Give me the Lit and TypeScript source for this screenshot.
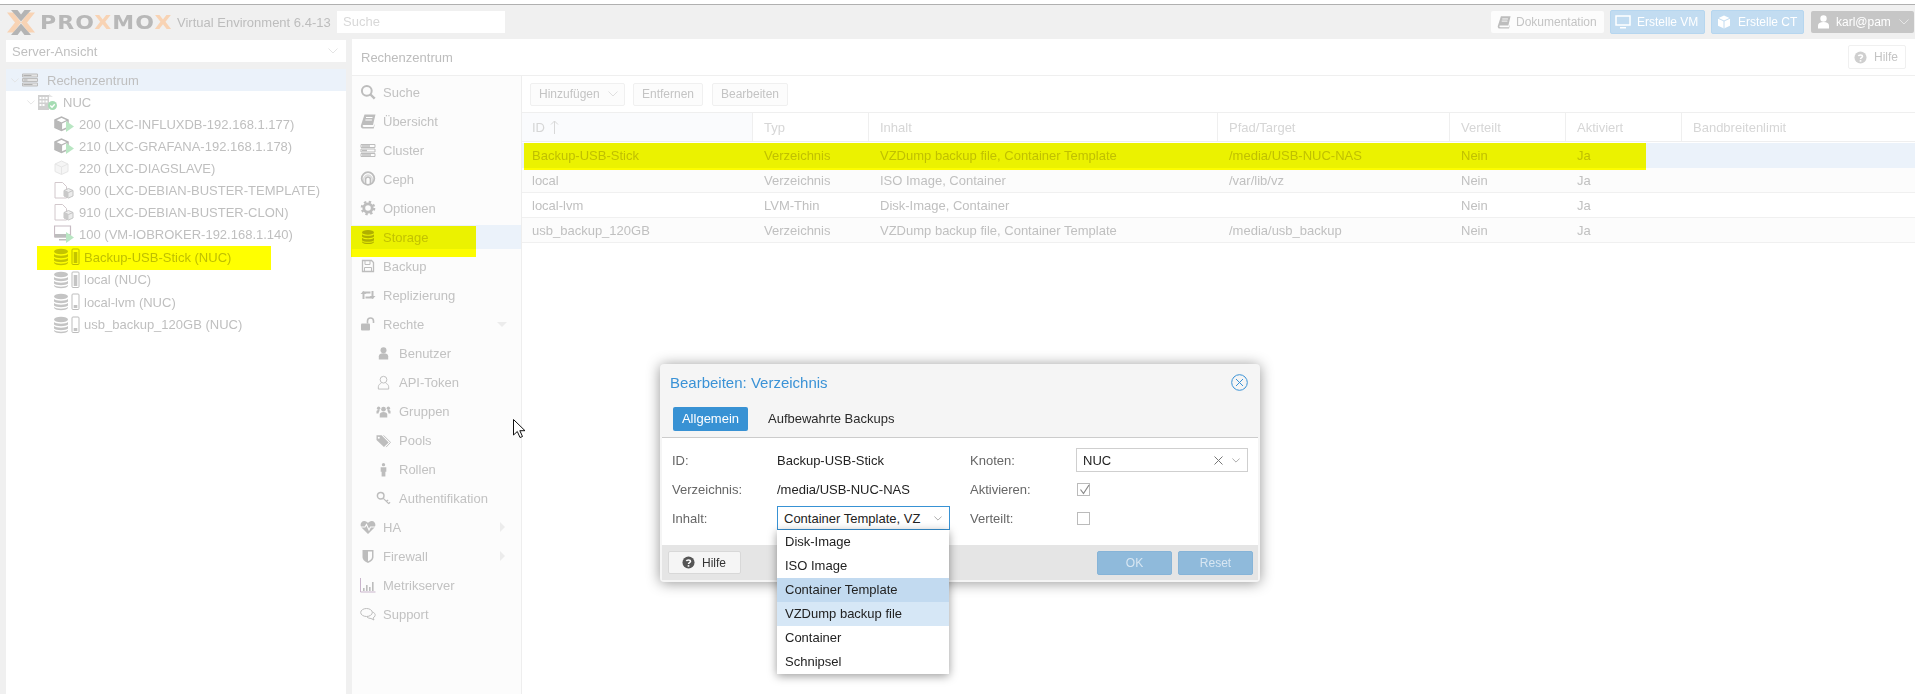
import { LitElement, html, css, svg } from "lit";
import { customElement } from "lit/decorators.js";

const ic = (vb: string, body: unknown) =>
  html`<svg class="svg" viewBox="${vb}" xmlns="http://www.w3.org/2000/svg">${body}</svg>`;

const G = "#bdbdbd";
const menuIcons: Record<string, unknown> = {
  search: ic("0 0 16 16", svg`<circle cx="6.800" cy="6.800" r="4.900" fill="none" stroke="${G}" stroke-width="2"/><path d="M10.500 10.500l4.200 4.200" stroke="${G}" stroke-width="2.400"/>`),
  book: ic("0 0 16 16", svg`<path d="M4.500 1.500H15.500L13 12H4c-1 0-1.500.6-1.300 1.200.2.500.7.800 1.300.800h9.500l1-3v1.500L13.700 15.500H3C1.500 15.500.500 14 .900 12.500z" fill="${G}"/><path d="M6 4.500h6.500M5.400 7h6.500" stroke="#fff"/>`),
  server: ic("0 0 16 16", svg`<path d="M1 2.500h14v3H1zM1 7h14v3H1zM1 11.500h14v3H1z" fill="none" stroke="${G}"/><path d="M2 4h8M2 8.500h5M2 13h9" stroke="${G}" stroke-width="1.600"/>`),
  ceph: ic("0 0 16 16", svg`<circle cx="8" cy="7.500" r="6.300" fill="none" stroke="${G}" stroke-width="1.800"/><path d="M5.600 13V8.500a2.400 2.400 0 0 1 4.800 0V13" fill="none" stroke="${G}" stroke-width="1.500"/><path d="M3.800 11V8.200a4.200 4.200 0 0 1 8.400 0V11" fill="none" stroke="${G}" stroke-width=".8"/>`),
  gear: ic("0 0 16 16", svg`<circle cx="8" cy="8" r="4.200" fill="none" stroke="${G}" stroke-width="2.800"/><circle cx="8" cy="8" r="6.200" fill="none" stroke="${G}" stroke-width="2.200" stroke-dasharray="2.400 2.470"/>`),
  db: ic("0 0 16 16", svg`<g fill="#b0b0b0"><ellipse cx="8" cy="3.400" rx="6" ry="2.400"/><path d="M2 5.200c1.500 2 10.500 2 12 0v2.400c-1.500 2.200-10.500 2.200-12 0zM2 8.800c1.500 2 10.500 2 12 0v2.400c-1.500 2.200-10.500 2.200-12 0zM2 12.200c1.500 2 10.500 2 12 0v1c-1.500 2.500-10.500 2.500-12 0z"/></g>`),
  floppy: ic("0 0 16 16", svg`<path d="M2.500 2.500h9l2 2v9h-11z" fill="none" stroke="${G}" stroke-width="1.300"/><path d="M5 3v3.500h5V3M4.500 13V9.500h7V13" fill="none" stroke="${G}"/>`),
  retweet: ic("0 0 16 16", svg`<path d="M3.500 12V5.500h7M12.500 4v6.500h-7" fill="none" stroke="${G}" stroke-width="2"/><path d="M.5 7l3-3 3 3zM9.500 9l3 3 3-3z" fill="${G}"/>`),
  unlock: ic("0 0 16 16", svg`<rect x="1" y="7.500" width="9" height="7" rx="1" fill="${G}"/><path d="M7.500 7.500V5a3 3 0 0 1 6 0v2" fill="none" stroke="${G}" stroke-width="1.600"/>`),
  user: ic("0 0 16 16", svg`<circle cx="8" cy="4.500" r="3.200" fill="${G}"/><path d="M3 14.500V11c0-2.200 1.800-3.200 5-3.200s5 1 5 3.200v3.500z" fill="${G}"/>`),
  usero: ic("0 0 16 16", svg`<circle cx="8" cy="5" r="3.600" fill="none" stroke="${G}"/><path d="M2.500 15v-2.500c0-2 2-3.500 3-3.500M13.500 15v-2.500c0-2-2-3.500-3-3.500M2.500 15h11" fill="none" stroke="${G}"/>`),
  users: ic("0 0 16 16", svg`<g fill="${G}"><circle cx="8" cy="5.500" r="2.500"/><circle cx="2.800" cy="4.500" r="1.800"/><circle cx="13.200" cy="4.500" r="1.800"/><path d="M4 14.500v-3.500c0-1.500 1.500-2.500 4-2.500s4 1 4 2.500v3.500zM.5 10V8c0-.8 1-1.500 2.300-1.500.6 0 1 .2 1.400.6-1 .6-1.500 1.700-1.500 2.900zM15.500 10V8c0-.8-1-1.500-2.300-1.500-.6 0-1 .2-1.400.6 1 .6 1.500 1.700 1.500 2.900z"/></g>`),
  tags: ic("0 0 16 16", svg`<path d="M.5 2.500h5.500l7.500 7.500-5 5-8-7.500z" fill="${G}"/><path d="M8 2.500l7.500 7.500-4.700 5" fill="none" stroke="${G}"/><circle cx="3" cy="5" r="1.100" fill="#fff"/>`),
  male: ic("0 0 16 16", svg`<circle cx="8" cy="2.800" r="1.800" fill="${G}"/><path d="M5 5.500h6v5h-1v5H6v-5H5z" fill="${G}"/>`),
  key: ic("0 0 16 16", svg`<circle cx="5" cy="5" r="3.500" fill="none" stroke="${G}" stroke-width="1.600"/><path d="M7.800 7.800l6 6M11 11l2-1.500M13.500 13.500l1.500-1.500" fill="none" stroke="${G}" stroke-width="1.300"/>`),
  heart: ic("0 0 16 16", svg`<path d="M8 15L1.500 8.500C-.5 6 1 2 4.200 2 6 2 7.300 3 8 4c.7-1 2-2 3.800-2C15 2 16.500 6 14.500 8.500z" fill="${G}"/><path d="M0 8h5l1.500-2.500L9 11l1.500-3H16" fill="none" stroke="#fcfcfc" stroke-width="1.100"/>`),
  shield: ic("0 0 16 16", svg`<path d="M2.500 2h11v7c0 3-3 5-5.500 6-2.500-1-5.500-3-5.500-6z" fill="${G}"/><path d="M8 3.500h4V9c0 2-2 3.500-4 4.300z" fill="#fcfcfc"/>`),
  chart: ic("0 0 16 16", svg`<path d="M.5 1v14h15" fill="none" stroke="#c9b5cc"/><path d="M3 11h1.600v3H3zM6 8h1.600v6H6zM9 10h1.600v4H9zM12 5h1.600v9H12z" fill="${G}"/>`),
  comments: ic("0 0 16 16", svg`<ellipse cx="6.500" cy="6.500" rx="5.800" ry="4" fill="none" stroke="${G}"/><path d="M12.500 6c2 .8 3 2 2.600 3.500-.3 1.200-1 2-2.100 2.500l1 2-3-1.500c-1.500 0-3-.5-4-1.500" fill="none" stroke="${G}"/>`),
};

const cube = svg`<path d="M1 5l6.500-3 6.500 3v7.500L7.500 15.500 1 12.500z" fill="#fff" stroke="#b5b5b5" stroke-width="1.500"/><path d="M1 5l6.500 3 6.500-3M7.500 8v7.500" fill="none" stroke="#b5b5b5" stroke-width="1.200"/><path d="M1 5l6.500 3v7.500L1 12.500z" fill="#b9b9b9"/>`;
const paleCube = svg`<path d="M1 5l6.500-3 6.500 3v7.500L7.500 15.500 1 12.500z" fill="#f5f5f5" stroke="#e6e6e6"/><path d="M1 5l6.500 3 6.500-3M7.500 8v7.500" fill="none" stroke="#e6e6e6"/>`;
const play = svg`<path d="M12 6l8 5.500L12 17z" fill="#b9e6c3"/>`;
const tplDoc = svg`<path d="M1 1.500h7.500l4 4V17H1z" fill="none" stroke="#d2c8cc"/><path d="M10 9.500l4.500-2 4.500 2v5.500l-4.500 2-4.500-2z" fill="#ececec" stroke="#c4c4c4"/><path d="M10 9.500l4.500 2 4.500-2" fill="none" stroke="#c4c4c4"/><path d="M10 9.500l4.500 2V17l-4.500-2z" fill="#c9c9c9"/>`;
const dbStack = svg`<g fill="#c4c4c4"><ellipse cx="7" cy="3.500" rx="7" ry="2.800"/><path d="M0 6c2 2.300 12 2.300 14 0v2.500c-2 2.300-12 2.300-14 0zM0 10c2 2.300 12 2.300 14 0v2.500c-2 2.300-12 2.300-14 0zM0 14c2 2.300 12 2.300 14 0v1c-2 3-12 3-14 0z"/></g>`;

const treeIcons: Record<string, unknown> = {
  server: ic("0 0 16 14", svg`<path d="M.5 1h15v3H.5zM.5 5.500h15v3H.5zM.5 10h15v3H.5z" fill="#e4e4e4" stroke="#bdbdbd"/><path d="M1.500 2.500h8M1.500 7h4M1.500 11.500h9" stroke="#b0b0b0" stroke-width="1.200"/>`),
  node: ic("0 0 19 16", svg`<path d="M0 1h11v15H0z" fill="#d0d0d0"/><path d="M1.500 3h2v2h-2zM4.500 3h2v2h-2zM7.500 3h2v2h-2zM1.500 6.500h2v2h-2zM4.500 6.500h2v2h-2zM7.500 6.500h2v2h-2zM1.500 10h2v2h-2zM4.500 10h2v2h-2z" fill="#fff"/><path d="M11 0l4 3h-4z" fill="#e6e6e6"/><circle cx="14.500" cy="11.500" r="4.500" fill="#a5dcb3"/><path d="M12.300 11.500l1.700 1.700 2.700-3" fill="none" stroke="#fff" stroke-width="1.300"/>`),
  lxc: ic("0 0 20 18", svg`${cube}${play}`),
  lxcoff: ic("0 0 20 18", paleCube),
  tpl: ic("0 0 20 18", tplDoc),
  vm: ic("0 0 20 18", svg`<path d="M.5 1h16v11H.5z" fill="none" stroke="#c8bcc4" stroke-width="1.200"/><path d="M1 9h15v3.500H1zM5 14h7v1.500H5z" fill="#bdbdbd"/><path d="M12 7l8 5.500-8 5.500z" fill="#b9e6c3"/>`),
  stFull: ic("0 0 26 18", svg`${dbStack}<rect x="18" y="1" width="7" height="15.500" rx="1" fill="#fff" stroke="#bdbdbd"/><rect x="19.700" y="4" width="3.600" height="11" fill="#c4c4c4"/>`),
  stLow: ic("0 0 26 18", svg`${dbStack}<rect x="18" y="1" width="7" height="15.500" rx="1" fill="#fff" stroke="#bdbdbd"/><rect x="19.700" y="12" width="3.600" height="3" fill="#c4c4c4"/>`),
};

const chevron = (stroke = "#dcdcdc") =>
  html`<svg class="chev" viewBox="0 0 10 6"><path d="M.5.500L5 5 9.500.500" fill="none" stroke="${stroke}"/></svg>`;

const tree = [
  { cls: "d0 sel", chev: true, icon: "server", w: "i16", text: "Rechenzentrum" },
  { cls: "d1", chev: true, icon: "node", w: "i19", text: "NUC" },
  { cls: "d2", icon: "lxc", w: "i20", text: "200 (LXC-INFLUXDB-192.168.1.177)" },
  { cls: "d2", icon: "lxc", w: "i20", text: "210 (LXC-GRAFANA-192.168.1.178)" },
  { cls: "d2", icon: "lxcoff", w: "i20", text: "220 (LXC-DIAGSLAVE)" },
  { cls: "d2", icon: "tpl", w: "i20", text: "900 (LXC-DEBIAN-BUSTER-TEMPLATE)" },
  { cls: "d2", icon: "tpl", w: "i20", text: "910 (LXC-DEBIAN-BUSTER-CLON)" },
  { cls: "d2 last", icon: "vm", w: "i20", text: "100 (VM-IOBROKER-192.168.1.140)" },
  { cls: "d2 st", icon: "stFull", w: "i26", text: "Backup-USB-Stick (NUC)" },
  { cls: "d2 st", icon: "stFull", w: "i26", text: "local (NUC)" },
  { cls: "d2 st", icon: "stLow", w: "i26", text: "local-lvm (NUC)" },
  { cls: "d2 st", icon: "stLow", w: "i26", text: "usb_backup_120GB (NUC)" },
];

const menu = [
  { icon: "search", text: "Suche" },
  { icon: "book", text: "Übersicht" },
  { icon: "server", text: "Cluster" },
  { icon: "ceph", text: "Ceph" },
  { icon: "gear", text: "Optionen" },
  { icon: "db", text: "Storage", sel: true },
  { icon: "floppy", text: "Backup" },
  { icon: "retweet", text: "Replizierung" },
  { icon: "unlock", text: "Rechte", caret: "down" },
  { icon: "user", text: "Benutzer", sub: true },
  { icon: "usero", text: "API-Token", sub: true },
  { icon: "users", text: "Gruppen", sub: true },
  { icon: "tags", text: "Pools", sub: true },
  { icon: "male", text: "Rollen", sub: true },
  { icon: "key", text: "Authentifikation", sub: true },
  { icon: "heart", text: "HA", caret: "right" },
  { icon: "shield", text: "Firewall", caret: "right" },
  { icon: "chart", text: "Metrikserver" },
  { icon: "comments", text: "Support" },
];

const cols = ["ID", "Typ", "Inhalt", "Pfad/Target", "Verteilt", "Aktiviert", "Bandbreitenlimit"];
const rows = [
  { cls: "sel", c: ["Backup-USB-Stick", "Verzeichnis", "VZDump backup file, Container Template", "/media/USB-NUC-NAS", "Nein", "Ja", ""] },
  { cls: "alt", c: ["local", "Verzeichnis", "ISO Image, Container", "/var/lib/vz", "Nein", "Ja", ""] },
  { cls: "", c: ["local-lvm", "LVM-Thin", "Disk-Image, Container", "", "Nein", "Ja", ""] },
  { cls: "alt", c: ["usb_backup_120GB", "Verzeichnis", "VZDump backup file, Container Template", "/media/usb_backup", "Nein", "Ja", ""] },
];

const drop = [
  { t: "Disk-Image", c: "" },
  { t: "ISO Image", c: "" },
  { t: "Container Template", c: "picked" },
  { t: "VZDump backup file", c: "hover" },
  { t: "Container", c: "" },
  { t: "Schnipsel", c: "" },
];

const helpIcon = (bg: string, fg: string) =>
  html`<svg class="help" viewBox="0 0 14 14"><circle cx="7" cy="7" r="6.500" fill="${bg}"/><path d="M4.800 5.500C5 3.800 9.200 3.700 9.200 5.700c0 1.500-2.200 1.500-2.200 3" fill="none" stroke="${fg}" stroke-width="1.600"/><path d="M6.100 9.800h1.800v1.700H6.100z" fill="${fg}"/></svg>`;

@customElement("app-root")
export class AppRoot extends LitElement {
  static styles = css`
    :host { display: block; position: relative; width: 1915px; height: 694px; overflow: hidden; background: #fff;
      font-family: "Liberation Sans", Arial, sans-serif; font-size: 13px; color: #bdbdbd; }
    .svg { display: block; width: 100%; height: 100%; }
    .chev { display: block; width: 10px; height: 6px; flex: none; }
    .topline { height: 4px; background: #fff; border-bottom: 1px solid #b0b0b0; }
    .page { height: 689px; background: #f0f0f0; display: flex; flex-direction: column; }
    .head { height: 34px; flex: none; display: flex; align-items: center; padding-left: 7px; }
    .logoX { width: 28px; height: 25px; flex: none; }
    .word { margin-left: 5px; width: 135px; flex: none; font: bold 20px "DejaVu Sans", sans-serif; color: #b8b8b8; letter-spacing: 1px; white-space: nowrap; transform: scaleX(1.1); transform-origin: left center; }
    .word b { color: #f8d3b4; font-weight: bold; }
    .ver { margin-left: 2px; width: 160px; flex: none; color: #bdbdbd; white-space: nowrap; }
    .search { width: 162px; height: 22px; background: #fff; padding-left: 6px; line-height: 22px; color: #d8d8d8; flex: none; }
    .right { margin-left: auto; display: flex; align-items: center; padding-right: 1px; }
    .hb { height: 22px; box-sizing: border-box; border-radius: 2px; display: flex; align-items: center; font-size: 12px; flex: none; }
    .hb .ico { width: 16px; height: 14px; flex: none; margin-right: 6px; }
    .doc { width: 113px; background: #fcfcfc; color: #c4c4c4; padding-left: 5px; margin-right: 6px; }
    .doc .ico { margin-right: 4px; }
    .create { height: 24px; width: 95px; background: #c2dcf1; border: 1px solid #b6d6ef; color: #fff; padding-left: 4px; margin-right: 6px; }
    .ct { width: 93px; margin-right: 7px; }
    .userb { width: 103px; background: #c6c6c6; color: #fff; padding-left: 6px; }
    .userb .ico { width: 13px; margin-right: 6px; }
    .userb .chev { margin-left: 8px; }
    .main { flex: 1; display: flex; min-height: 0; }
    .left { margin-left: 6px; width: 340px; flex: none; display: flex; flex-direction: column; }
    .combo { height: 22px; flex: none; background: #fff; display: flex; align-items: center; padding: 0 6px 0 6px; margin-top: 1px; color: #c0c0c0; justify-content: space-between; }
    .combo .chev { margin-right: 2px; }
    .treebox { flex: 1; margin-top: 7px; background: #fff; }
    .row { height: 22px; display: flex; align-items: center; color: #bfbfbf; white-space: nowrap; }
    .row.sel { background: #ebf2fa; }
    .row.last { margin-bottom: 1px; }
    .row.st { height: 22.500px; }
    .row .tch { width: 8px; margin-right: 3px; display: flex; flex: none; }
    .row .tch .chev { width: 8px; height: 5px; }
    .d0 { padding-left: 5px; }
    .d1 { padding-left: 21px; }
    .d2 { padding-left: 48px; }
    .ti { flex: none; height: 18px; display: block; }
    .i16 { width: 16px; height: 14px; margin-right: 9px; }
    .i19 { width: 19px; height: 16px; margin-right: 6px; }
    .i20 { width: 20px; height: 18px; margin-right: 5px; }
    .i26 { width: 26px; height: 18px; margin-right: 4px; }
    .center { margin-left: 6px; flex: 1; background: #fff; display: flex; flex-direction: column; min-width: 0; }
    .title { height: 36px; flex: none; border-bottom: 1px solid #efefef; display: flex; align-items: center; padding-left: 9px; padding-right: 9px; justify-content: space-between; }
    .hilfe { width: 58px; height: 24px; box-sizing: border-box; border: 1px solid #f0f0f0; border-radius: 2px; display: flex; align-items: center; padding-left: 5px; font-size: 12px; background: #fff; color: #c4c4c4; }
    .help { width: 13px; height: 13px; margin-right: 7px; flex: none; display: block; }
    .body { flex: 1; display: flex; min-height: 0; }
    .menu { width: 169px; flex: none; background: #fcfcfc; border-right: 1px solid #eee; padding-top: 4px; box-sizing: content-box; display: flex; flex-direction: column; gap: 5px; }
    .mi { height: 24px; flex: none; display: flex; align-items: center; padding-left: 8px; color: #c2c2c2; }
    .mi.sel { background: #ebf2fa; }
    .mi.sub { padding-left: 24px; }
    .mi .mic { width: 16px; height: 16px; flex: none; margin-right: 7px; }
    .mi.sub .mic { width: 15px; height: 15px; margin-right: 8px; }
    .caretd { margin-left: auto; margin-right: 14px; width: 0; height: 0; border-left: 5px solid transparent; border-right: 5px solid transparent; border-top: 5px solid #ececec; }
    .caretr { margin-left: auto; margin-right: 16px; width: 0; height: 0; border-top: 5px solid transparent; border-bottom: 5px solid transparent; border-left: 5px solid #ececec; }
    .grid { flex: 1; min-width: 0; display: flex; flex-direction: column; }
    .tools { height: 36px; flex: none; display: flex; align-items: center; padding-left: 8px; }
    .tb { height: 23px; box-sizing: border-box; border: 1px solid #f0f0f0; border-radius: 2px; display: flex; align-items: center; padding-left: 8px; font-size: 12px; color: #c4c4c4; background: #fcfcfc; flex: none; }
    .t1 { width: 95px; margin-right: 8px; }
    .t1 .chev { margin-left: 8px; }
    .t2 { width: 70px; margin-right: 9px; }
    .t3 { width: 76px; }
    .gr { display: grid; grid-template-columns: 231px 116px 349px 232px 116px 116px 232px; }
    .gh { height: 30px; border-top: 1px solid #efefef; border-bottom: 1px solid #efefef; box-sizing: border-box; }
    .gh div { padding-left: 11px; display: flex; align-items: center; border-right: 1px solid #efefef; color: #d6d6d6; background: #fff; }
    .gh div:first-child { background: #fafbfd; padding-left: 10px; }
    .gh div:last-child { border-right: 0; }
    .sort { width: 9px; height: 14px; margin-left: 5px; }
    .gb { height: 25px; box-sizing: border-box; border-bottom: 1px solid #f0f0f0; margin-top: 0; color: #c0c0c0; }
    .gb div { padding-left: 11px; line-height: 26px; white-space: nowrap; }
    .gb div:first-child { padding-left: 10px; }
    .gb.alt { background: #fcfcfc; }
    .gb.sel { background: #ebf2fa; border-bottom: 0; margin-top: 1px; }
    .mark { position: absolute; background: #ffff00; mix-blend-mode: multiply; }
    .m1 { left: 37px; top: 246px; width: 234px; height: 24px; }
    .m2 { left: 351px; top: 226px; width: 125px; height: 31px; }
    .m3 { left: 524px; top: 143px; width: 1122px; height: 27px; }
    .cursor { position: absolute; left: 513px; top: 419px; width: 13px; height: 20px; }
    .modal { position: absolute; left: 660px; top: 364px; width: 600px; height: 218px; box-sizing: border-box; padding: 0 2px 2px; background: #f5f5f5; border-radius: 4px; box-shadow: 0 1px 14px rgba(0,0,0,.42); display: flex; flex-direction: column; color: #222; }
    .mt { height: 36px; flex: none; display: flex; align-items: center; justify-content: space-between; padding: 0 10px 0 8px; color: #3a92d6; font-size: 15px; }
    .close { width: 17px; height: 17px; flex: none; }
    .tabs { height: 24px; flex: none; margin-top: 7px; padding: 0 0 6px 11px; display: flex; align-items: center; border-bottom: 1px solid #ccc; }
    .tab { height: 24px; line-height: 24px; border-radius: 2px; }
    .tab.on { width: 75px; text-align: center; background: #3892d4; color: #fff; margin-right: 20px; }
    .tab.off { color: #2a2a2a; }
    .mb { height: 107px; flex: none; background: #fff; box-sizing: border-box; padding: 10px 0 0 10px; display: grid; grid-template-columns: 105px 193px 106px 172px; grid-auto-rows: 24px; row-gap: 5px; align-items: center; }
    .lab { color: #666; }
    .field { height: 24px; box-sizing: border-box; border: 1px solid #cfcfcf; display: flex; align-items: center; padding-left: 6px; color: #222; background: #fff; }
    .x { margin-left: auto; width: 9px; height: 9px; margin-right: 9px; }
    .field .chev { width: 8px; height: 5px; margin-right: 7px; }
    .cb { width: 13px; height: 13px; box-sizing: border-box; border: 1px solid #bbb; margin-left: 1px; background: #fff; position: relative; }
    .cb svg { position: absolute; left: 0; top: -1px; width: 13px; height: 13px; }
    .inhalt { position: relative; width: 173px; height: 24px; box-sizing: border-box; border: 1px solid #3892d4; display: flex; align-items: center; padding-left: 6px; background: #fff; color: #222; }
    .inhalt .chev { margin-left: auto; margin-right: 7px; width: 8px; height: 5px; }
    .list { position: absolute; left: 0; top: 23px; width: 172px; box-sizing: border-box; background: #fff; box-shadow: 0 2px 9px rgba(0,0,0,.4); z-index: 2; margin-left: -1px; }
    .li { height: 24px; line-height: 24px; padding-left: 8px; color: #222; }
    .li.picked { background: #c2daf0; }
    .li.hover { background: #d6e7f6; }
    .mf { height: 35px; flex: none; background: #e5e5e5; display: flex; align-items: center; padding: 0 5px 0 6px; }
    .fh { width: 73px; height: 23px; box-sizing: border-box; border: 1px solid #d8d8d8; border-radius: 2px; background: #f5f5f5; display: flex; align-items: center; padding-left: 13px; font-size: 12px; color: #333; }
    .fb { width: 75px; height: 24px; box-sizing: border-box; border: 1px solid #86b4d8; border-radius: 2px; background: #8fbadb; color: #d7e6f2; display: flex; align-items: center; justify-content: center; font-size: 12px; margin-left: 6px; }
    .fb.first { margin-left: auto; }
  `;

  render() {
    return html`
      <div class="topline"></div>
      <div class="page">
        <div class="head">
          <svg class="logoX" viewBox="0 0 28 25">
            <path d="M0 2.500h6.500L14 12.500 6.500 22.500H0l8-10z" fill="#f8d3b4"/>
            <path d="M28 2.500h-6.500L14 12.500l7.500 10H28l-8-10z" fill="#f8d3b4"/>
            <path d="M4 0h6.500L14 4.500 17.500 0H24L14 11.500zM4 25h6.500L14 20.500l3.500 4.500H24L14 13.500z" fill="#b4b4b4"/>
          </svg>
          <div class="word">PRO<b>X</b>MO<b>X</b></div>
          <div class="ver">Virtual Environment 6.4-13</div>
          <div class="search">Suche</div>
          <div class="right">
            <div class="hb doc"><span class="ico">${menuIcons.book}</span>Dokumentation</div>
            <div class="hb create"><span class="ico">${ic("0 0 16 14", svg`<path d="M1 1h14v9H1z" fill="none" stroke="#fff" stroke-width="1.500"/><path d="M5 12h6v1.500H5z" fill="#fff"/>`)}</span>Erstelle VM</div>
            <div class="hb create ct"><span class="ico">${ic("0 0 16 14", svg`<path d="M8 .5l6 2.700v7.600l-6 2.700-6-2.700V3.200z" fill="#fff"/><path d="M2 3.200L8 6l6-2.800M8 6v7.500" fill="none" stroke="#c2dcf1"/>`)}</span>Erstelle CT</div>
            <div class="hb userb"><span class="ico">${ic("0 0 13 14", svg`<circle cx="6.500" cy="3.500" r="3.200" fill="#fff"/><path d="M1 13.500v-3c0-2 2-3.500 5.500-3.500s5.500 1.500 5.500 3.500v3z" fill="#fff"/>`)}</span>karl@pam${chevron("#e6e6e6")}</div>
          </div>
        </div>
        <div class="main">
          <div class="left">
            <div class="combo">Server-Ansicht${chevron("#e4e4e4")}</div>
            <div class="treebox">
              ${tree.map((r) => html`<div class="row ${r.cls}">
                ${r.chev ? html`<span class="tch">${chevron("#e0e0e0")}</span>` : ""}
                <span class="ti ${r.w}">${treeIcons[r.icon]}</span>${r.text}
              </div>`)}
            </div>
          </div>
          <div class="center">
            <div class="title">Rechenzentrum<div class="hilfe">${helpIcon("#cfcfcf", "#fff")}Hilfe</div></div>
            <div class="body">
              <div class="menu">
                ${menu.map((m) => html`<div class="mi ${m.sel ? "sel" : ""} ${m.sub ? "sub" : ""}">
                  <span class="mic">${menuIcons[m.icon]}</span>${m.text}
                  ${m.caret === "down" ? html`<span class="caretd"></span>` : m.caret === "right" ? html`<span class="caretr"></span>` : ""}
                </div>`)}
              </div>
              <div class="grid">
                <div class="tools">
                  <div class="tb t1">Hinzufügen${chevron("#e0e0e0")}</div>
                  <div class="tb t2">Entfernen</div>
                  <div class="tb t3">Bearbeiten</div>
                </div>
                <div class="gr gh">
                  ${cols.map((c, i) => html`<div>${c}${i === 0 ? html`<svg class="sort" viewBox="0 0 9 14"><path d="M4.500 14V1M1 4.500L4.500 1 8 4.500" fill="none" stroke="#d8d8d8"/></svg>` : ""}</div>`)}
                </div>
                ${rows.map((r) => html`<div class="gr gb ${r.cls}">${r.c.map((t) => html`<div>${t}</div>`)}</div>`)}
              </div>
            </div>
          </div>
        </div>
      </div>

      <div class="mark m1"></div>
      <div class="mark m2"></div>
      <div class="mark m3"></div>

      <svg class="cursor" viewBox="0 0 13 20"><path d="M.5.500v15.500l3.800-3.500 2.700 6 2.500-1-2.700-5.800h5.200z" fill="#fff" stroke="#111"/></svg>

      <div class="modal">
        <div class="mt">Bearbeiten: Verzeichnis
          <svg class="close" viewBox="0 0 17 17"><circle cx="8.500" cy="8.500" r="7.800" fill="none" stroke="#3a92d6"/><path d="M5 5l7 7M12 5l-7 7" stroke="#3a92d6"/></svg>
        </div>
        <div class="tabs"><div class="tab on">Allgemein</div><div class="tab off">Aufbewahrte Backups</div></div>
        <div class="mb">
          <div class="lab">ID:</div><div>Backup-USB-Stick</div>
          <div class="lab">Knoten:</div>
          <div class="field">NUC
            <svg class="x" viewBox="0 0 9 9"><path d="M.5.500l8 8M8.500.500l-8 8" stroke="#777"/></svg>
            ${chevron("#999")}
          </div>
          <div class="lab">Verzeichnis:</div><div>/media/USB-NUC-NAS</div>
          <div class="lab">Aktivieren:</div>
          <div class="cb"><svg viewBox="0 0 13 13"><path d="M2.500 6.500l3 4L11 2" fill="none" stroke="#888" stroke-width="1.200"/></svg></div>
          <div class="lab">Inhalt:</div>
          <div class="inhalt">Container Template, VZ${chevron("#999")}
            <div class="list">${drop.map((d) => html`<div class="li ${d.c}">${d.t}</div>`)}</div>
          </div>
          <div class="lab">Verteilt:</div>
          <div class="cb"></div>
        </div>
        <div class="mf">
          <div class="fh">${helpIcon("#555", "#fff")}Hilfe</div>
          <div class="fb first">OK</div>
          <div class="fb">Reset</div>
        </div>
      </div>
    `;
  }
}
